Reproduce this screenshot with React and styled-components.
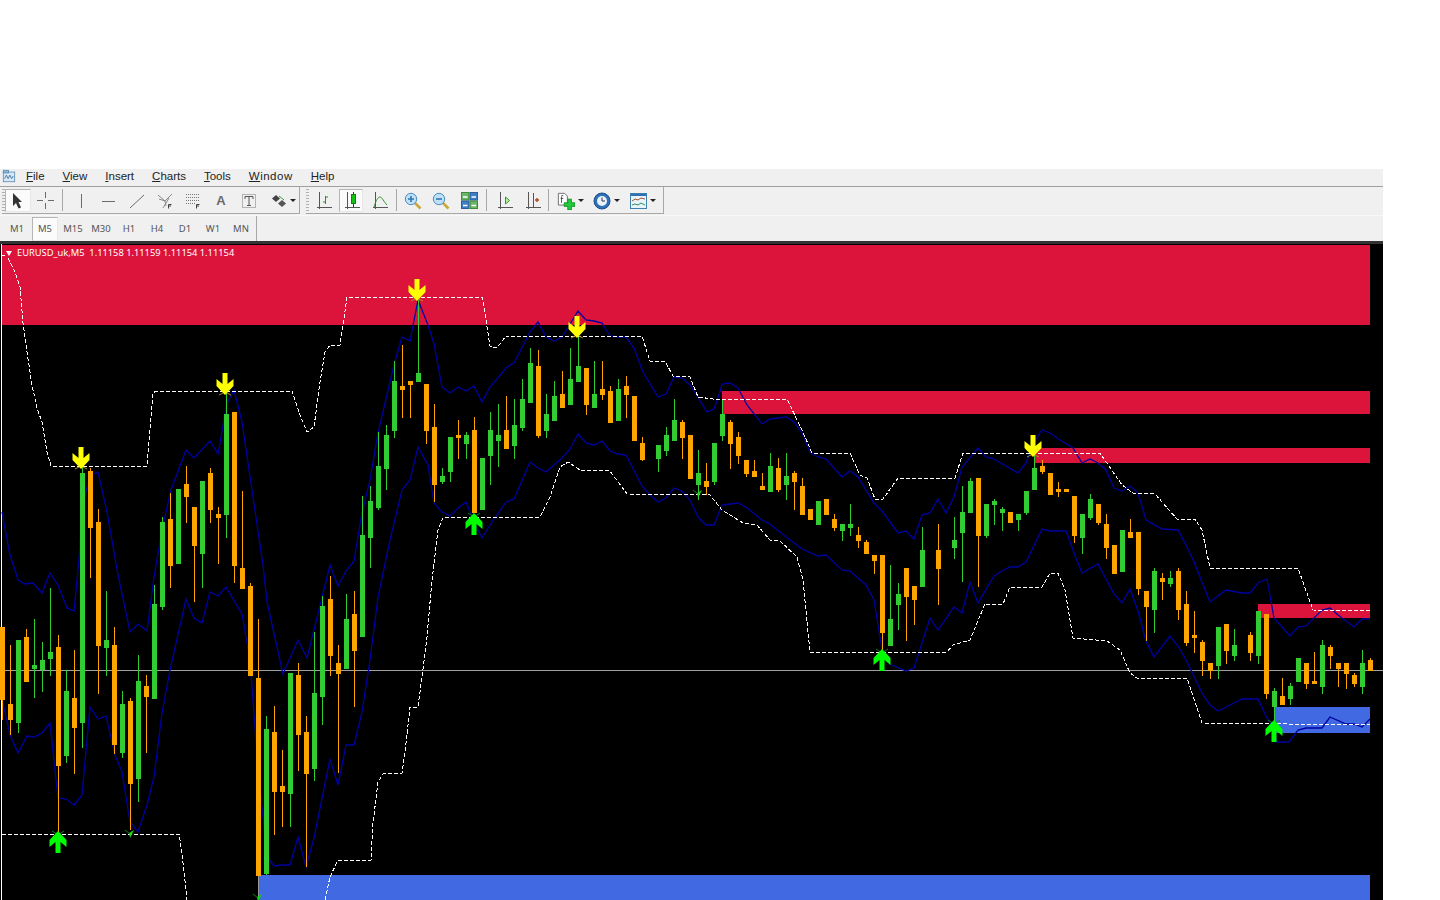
import styled, { createGlobalStyle } from "styled-components";

const GlobalStyle = createGlobalStyle`
  html, body {
    margin: 0;
    padding: 0;
    height: 900px;
    overflow: hidden;
    background: #fff;
    font-family: "Noto Sans", "Liberation Sans", sans-serif;
  }
`;

// [x, up?, bodyTop, bodyBottom, wickTop, wickBottom]
const CANDLES = [
  [2, 0, 627, 700, 627, 720], [10, 0, 704, 720, 645, 735], [18, 1, 640, 723, 640, 733],
  [26, 0, 637, 682, 629, 682], [34, 1, 665, 669, 619, 698], [42, 1, 660, 670, 642, 692],
  [50, 1, 652, 659, 588, 676], [58, 0, 647, 766, 635, 833], [66, 1, 691, 756, 670, 763],
  [74, 0, 698, 728, 650, 774], [82, 1, 473, 723, 467, 748], [90, 0, 471, 528, 468, 578],
  [98, 0, 522, 646, 509, 694], [106, 1, 640, 648, 591, 676], [114, 0, 645, 745, 627, 754],
  [122, 1, 704, 753, 691, 758], [130, 0, 701, 784, 698, 830], [138, 1, 681, 779, 655, 802],
  [146, 0, 686, 697, 675, 753], [154, 1, 604, 699, 585, 699], [162, 1, 522, 607, 517, 610],
  [170, 0, 519, 566, 493, 588], [178, 1, 489, 564, 489, 564], [186, 0, 484, 497, 466, 523],
  [194, 0, 507, 546, 507, 602], [202, 1, 481, 554, 481, 588], [210, 0, 473, 510, 468, 523],
  [218, 0, 514, 518, 507, 564], [226, 1, 414, 515, 393, 538], [234, 0, 412, 566, 412, 583],
  [242, 0, 568, 589, 491, 589], [250, 0, 586, 676, 583, 676], [258, 0, 678, 876, 619, 876],
  [266, 1, 729, 874, 716, 875], [274, 0, 732, 792, 706, 835], [282, 0, 786, 792, 750, 827],
  [290, 1, 673, 794, 673, 827], [298, 0, 675, 735, 663, 771], [306, 0, 732, 774, 716, 867],
  [314, 1, 693, 769, 632, 781], [322, 1, 606, 697, 596, 725], [330, 0, 599, 656, 576, 676],
  [338, 0, 663, 674, 645, 773], [346, 1, 619, 669, 594, 669], [354, 0, 614, 651, 591, 707],
  [362, 1, 535, 637, 496, 637], [370, 1, 501, 538, 486, 568], [378, 1, 466, 508, 432, 510],
  [386, 1, 435, 469, 425, 490], [394, 1, 381, 431, 361, 438], [402, 0, 386, 390, 345, 418],
  [410, 0, 381, 385, 381, 418], [418, 1, 373, 382, 300, 382], [426, 0, 384, 431, 384, 444],
  [434, 0, 427, 485, 404, 502], [442, 1, 476, 482, 468, 484], [450, 1, 437, 472, 437, 482],
  [458, 0, 435, 438, 420, 459], [466, 1, 435, 444, 432, 459], [474, 0, 430, 513, 417, 513],
  [482, 1, 458, 510, 458, 510], [490, 1, 430, 456, 412, 485], [498, 1, 435, 441, 404, 467],
  [506, 0, 430, 449, 396, 449], [514, 1, 425, 446, 399, 459], [522, 1, 399, 428, 379, 431],
  [530, 1, 363, 403, 348, 403], [538, 0, 366, 436, 350, 438], [546, 1, 414, 431, 394, 438],
  [554, 1, 396, 421, 381, 421], [562, 0, 394, 408, 371, 408], [570, 1, 379, 405, 348, 405],
  [578, 1, 366, 382, 337, 382], [586, 0, 368, 405, 368, 415], [594, 1, 394, 408, 361, 408],
  [602, 0, 389, 395, 361, 400], [610, 0, 391, 423, 386, 423], [618, 1, 389, 421, 379, 421],
  [626, 0, 386, 395, 376, 418], [634, 0, 396, 441, 396, 441], [642, 0, 443, 460, 437, 461],
  [658, 1, 445, 459, 445, 472], [666, 1, 435, 451, 427, 456], [674, 1, 420, 441, 399, 441],
  [682, 0, 422, 438, 420, 459], [690, 0, 435, 479, 435, 479], [698, 1, 473, 485, 450, 500],
  [706, 0, 481, 487, 463, 495], [714, 1, 443, 482, 443, 485], [722, 1, 414, 436, 399, 441],
  [730, 0, 422, 444, 420, 469], [738, 0, 437, 456, 432, 464], [746, 0, 460, 474, 460, 477],
  [754, 0, 471, 477, 460, 477], [762, 0, 486, 490, 473, 490], [770, 1, 466, 492, 453, 492],
  [778, 0, 468, 490, 458, 492], [786, 1, 476, 485, 453, 500], [794, 0, 473, 482, 471, 510],
  [802, 0, 486, 515, 478, 515], [810, 0, 509, 520, 509, 520], [818, 1, 501, 525, 501, 525],
  [826, 0, 499, 515, 499, 515], [834, 0, 519, 528, 514, 531], [842, 1, 524, 531, 524, 541],
  [850, 1, 524, 528, 504, 536], [858, 0, 535, 541, 527, 548], [866, 0, 542, 554, 540, 554],
  [874, 0, 555, 561, 555, 574], [882, 0, 555, 633, 555, 650], [890, 1, 619, 646, 565, 646],
  [898, 1, 594, 605, 583, 630], [906, 0, 568, 597, 568, 641], [914, 0, 586, 600, 586, 625],
  [922, 1, 550, 587, 527, 587], [938, 0, 550, 569, 524, 605], [954, 1, 540, 548, 517, 559],
  [962, 1, 512, 533, 486, 582], [970, 1, 481, 513, 478, 513], [978, 0, 478, 536, 478, 587],
  [986, 1, 504, 536, 504, 538], [994, 1, 501, 505, 499, 525], [1002, 1, 509, 513, 507, 531],
  [1010, 0, 512, 523, 512, 523], [1018, 1, 514, 520, 514, 531], [1026, 1, 491, 513, 491, 515],
  [1034, 1, 468, 490, 453, 490], [1042, 0, 466, 472, 460, 474], [1050, 0, 473, 495, 473, 495],
  [1058, 0, 489, 492, 482, 497], [1066, 0, 489, 492, 489, 492], [1074, 0, 496, 536, 496, 543],
  [1082, 1, 514, 538, 514, 554], [1090, 1, 499, 518, 494, 520], [1098, 0, 504, 523, 504, 525],
  [1106, 0, 524, 548, 514, 559], [1114, 0, 545, 574, 545, 574], [1122, 1, 530, 572, 530, 572],
  [1130, 0, 532, 538, 519, 538], [1138, 0, 532, 589, 532, 595], [1146, 0, 591, 607, 591, 641],
  [1154, 1, 571, 610, 568, 633], [1162, 0, 578, 582, 573, 600], [1170, 1, 578, 584, 571, 587],
  [1178, 0, 571, 610, 568, 620], [1186, 0, 604, 643, 591, 646], [1194, 0, 635, 638, 611, 653],
  [1202, 0, 642, 661, 640, 676], [1210, 0, 663, 671, 663, 679], [1218, 1, 627, 666, 627, 679],
  [1226, 0, 624, 651, 624, 664], [1234, 1, 645, 656, 629, 661], [1250, 0, 635, 653, 632, 661],
  [1258, 1, 611, 656, 611, 664], [1266, 0, 614, 694, 614, 699], [1274, 1, 691, 707, 688, 723],
  [1282, 0, 696, 705, 678, 705], [1290, 1, 686, 699, 683, 705], [1298, 1, 658, 682, 658, 682],
  [1306, 0, 663, 684, 663, 689], [1314, 0, 681, 684, 652, 684], [1322, 1, 645, 687, 640, 694],
  [1330, 0, 647, 656, 645, 669], [1338, 0, 663, 669, 663, 687], [1346, 0, 663, 674, 663, 689],
  [1354, 0, 675, 684, 673, 687], [1362, 1, 663, 687, 650, 694], [1370, 0, 660, 671, 658, 671],
];

const BAND_UP = "2,512 10,555 15,570 18,580 25,584 33,583 42,593 50,573 58,585 67,608 74,611 78,570 80,547 82,508 90,475 98,472 107,512 118,575 130,632 138,624 147,631 154,577 163,525 171,490 186,450 194,458 210,441 218,454 227,403 234,390 242,422 263,565 267,602 283,674 298,640 307,658 330,565 338,586 346,571 354,561 362,513 370,480 378,433 394,365 402,337 410,341 418,300 428,325 434,344 442,387 450,393 458,387 466,391 474,386 482,402 490,387 507,367 514,363 530,332 538,322 546,337 554,341 562,337 578,311 586,320 594,321 602,323 610,336 618,337 626,337 634,348 643,372 658,397 666,394 674,377 682,378 690,385 707,412 714,409 720,392 722,384 730,383 738,388 747,405 762,424 770,419 786,417 794,422 802,433 810,452 818,457 826,459 842,477 850,471 858,477 874,503 882,511 898,533 906,531 914,539 922,515 930,513 938,499 946,513 954,497 962,467 978,448 986,457 994,459 1018,473 1026,463 1034,442 1042,430 1050,433 1060,440 1073,448 1082,463 1090,459 1098,463 1106,470 1114,488 1122,491 1130,486 1138,493 1146,520 1162,529 1178,530 1186,545 1194,562 1210,602 1226,590 1242,593 1250,593 1258,583 1267,579 1274,618 1290,636 1298,627 1306,626 1322,610 1330,608 1338,615 1354,627 1362,619 1370,619";

const BAND_DOWN = "2,698 10,735 18,753 27,736 34,737 42,733 50,723 55,770 58,798 66,799 74,805 82,795 90,707 98,719 106,716 115,755 122,772 130,822 138,832 147,805 154,777 162,713 170,670 186,599 194,618 202,623 210,592 218,596 226,587 242,614 250,660 258,767 267,857 274,866 282,865 290,865 298,837 306,867 314,838 330,759 338,785 346,745 354,745 362,712 370,660 378,597 390,540 402,490 410,480 418,447 428,465 434,503 442,512 450,516 458,508 466,502 474,522 482,538 490,525 506,502 514,499 530,462 538,468 546,472 562,458 570,449 578,434 586,443 594,445 602,441 610,451 618,454 626,455 642,486 650,495 658,502 666,498 674,488 682,491 690,500 698,517 706,525 714,525 720,510 722,505 730,504 738,503 746,507 762,520 770,524 786,537 802,549 818,556 826,555 842,570 850,571 866,585 874,600 882,650 890,664 906,671 914,668 930,618 938,630 954,607 962,613 970,582 978,603 994,576 1002,571 1010,567 1018,567 1026,562 1042,529 1050,531 1066,531 1074,553 1082,573 1098,564 1114,594 1122,603 1130,589 1138,611 1146,641 1154,657 1170,636 1178,646 1186,660 1202,693 1210,705 1218,711 1234,703 1242,699 1258,699 1266,716 1274,730 1277,742 1289,742 1298,730 1306,728 1322,728 1330,717 1346,724 1354,724 1362,727 1370,719";

const CHANNEL_UP = "8,258 15,272 20,287 23,323 27,352 32,385 37,408 42,422 47,452 51,466 147,466 149,442 153,393 156,391 292,391 300,415 307,432 314,427 320,382 325,352 330,345 340,345 347,297 482,297 485,312 487,327 490,346 497,348 506,336 642,336 650,361 665,361 673,376 690,377 698,397 713,399 787,399 802,430 812,453 850,453 860,475 867,478 875,499 883,499 898,478 955,478 963,453 1100,453 1122,485 1133,493 1155,494 1177,519 1195,519 1202,530 1210,568 1298,568 1313,610 1370,611";

const CHANNEL_LOW_A = "2,834 179,834 182,853 187,900";

const CHANNEL_LOW_B = "325,900 330,877 338,860 371,860 373,823 378,782 383,774 402,773 405,752 410,707 418,707 422,677 427,637 432,580 438,530 443,518 540,517 550,497 560,467 568,462 580,470 610,471 627,494 710,495 722,510 743,523 757,525 770,540 780,541 797,557 803,580 810,652 947,652 953,645 970,640 985,604 1003,604 1010,587 1042,587 1050,573 1058,573 1065,590 1073,638 1107,641 1120,650 1130,673 1137,678 1187,678 1202,723 1370,725";

const RED_ZONES = [
  [2, 245, 1368, 80],
  [722, 391, 648, 23],
  [1035, 448, 335, 15],
  [1258, 604, 112, 14],
];

const BLUE_ZONES = [
  [259, 875, 1111, 25],
  [1274, 707, 96, 26],
];

const SELL_ARROWS = [[81, 469], [225, 395], [417, 301], [577, 338], [1033, 457]];
const BUY_ARROWS = [[58, 831], [474, 513], [882, 649], [1274, 720]];
const SMALL_TICKS = [[130, 834], [698, 494], [258, 898]];

const MENUS = [
  ["F", "ile"], ["V", "iew"], ["I", "nsert"], ["C", "harts"],
  ["T", "ools"], ["W", "indow", 0.5], ["H", "elp"],
];

const PERIODS = ["M1", "M5", "M15", "M30", "H1", "H4", "D1", "W1", "MN"];

const AppIcon = () => (
  <svg width="14" height="14" viewBox="0 0 16 16">
    <rect x="1.5" y="3.5" width="13" height="11" fill="#dbe9f6" stroke="#5f8fb8" />
    <rect x="1.5" y="1.5" width="6" height="3" fill="#8fb6d8" stroke="#5f8fb8" />
    <path d="M3 11l2-4 2 4 2-4 2 4 2-3" fill="none" stroke="#3a6f9c" />
  </svg>
);

const line = "#6b6b6b";

const CursorIcon = () => (
  <svg width="16" height="18" viewBox="0 0 16 18">
    <path d="M3 1v13l3-3 2.5 5.5 2.5-1L8.5 10H12z" fill="#333" />
  </svg>
);
const CrossIcon = () => (
  <svg width="17" height="17" viewBox="0 0 17 17">
    <path d="M8.5 0v6M8.5 11v6M0 8.5h6M11 8.5h6" stroke={line} fill="none" />
  </svg>
);
const VLineIcon = () => (
  <svg width="16" height="16" viewBox="0 0 16 16">
    <path d="M8.5 1v14" stroke={line} />
  </svg>
);
const HLineIcon = () => (
  <svg width="16" height="16" viewBox="0 0 16 16">
    <path d="M1 8.5h13" stroke={line} />
  </svg>
);
const TrendIcon = () => (
  <svg width="16" height="16" viewBox="0 0 16 16">
    <path d="M1 15L15 2" stroke={line} fill="none" />
  </svg>
);
const FanIcon = () => (
  <svg width="16" height="16" viewBox="0 0 16 16">
    <path d="M1 2l7 6M2 6l6 2M15 1L8 8M12 5L6 15M8 8l1 5" stroke="#8a8a8a" fill="none" />
    <path d="M11.5 15.5v-4h3M11.5 13h2.5" stroke="#444" fill="none" />
  </svg>
);
const FiboIcon = () => (
  <svg width="16" height="16" viewBox="0 0 16 16">
    <path d="M1 1.5h13M1 4.5h13M1 7.5h13M1 10.5h9" stroke="#777" strokeDasharray="1 1" fill="none" />
    <path d="M11.5 15.5v-4h3M11.5 13h2.5" stroke="#444" fill="none" />
  </svg>
);
const LabelIcon = () => (
  <svg width="16" height="16" viewBox="0 0 16 16">
    <rect x="1.5" y="1.5" width="13" height="13" fill="none" stroke="#777" strokeDasharray="1 1" />
    <path d="M4 3.5h8v2.5M4 3.5V6M8 3.5v9M6 12.5h4" stroke="#555" fill="none" />
  </svg>
);
const ShapesIcon = () => (
  <svg width="16" height="16" viewBox="0 0 16 16">
    <path d="M5 2l4 3.5-4 3.5-4-3.5z" fill="#444" />
    <path d="M11 7l4 3.5-4 3.5-4-3.5z" fill="#555" />
    <path d="M8 3l5 4" stroke="#3aa03a" fill="none" />
  </svg>
);
const Axes = () => <path d="M5.5 0v17M3 15.5h15" stroke="#555" fill="none" />;
const BarChartIcon = () => (
  <svg width="18" height="18" viewBox="0 0 18 18">
    <Axes />
    <path d="M11.5 4v8M11.5 5H14M9 10h2.5" stroke="#1c9a1c" fill="none" />
  </svg>
);
const CandleIcon = () => (
  <svg width="18" height="18" viewBox="0 0 18 18">
    <Axes />
    <path d="M11.5 0v15" stroke="#333" />
    <rect x="9.5" y="2.5" width="4" height="9" fill="#12c312" stroke="#1b7a1b" />
  </svg>
);
const LineChartIcon = () => (
  <svg width="18" height="18" viewBox="0 0 18 18">
    <Axes />
    <path d="M4 15C6 8 8 5 10 5C12 5 14 10 17 13" stroke="#2f8f2f" fill="none" />
  </svg>
);
const Glass = ({ plus }) => (
  <svg width="18" height="18" viewBox="0 0 18 18">
    <path d="M11 11l5.5 5.5" stroke="#c9a83a" strokeWidth="2.6" />
    <circle cx="7" cy="7" r="5.7" fill="#bfe0f7" stroke="#4a8fc4" />
    <path d={plus ? "M4 7h6M7 4v6" : "M4 7h6"} stroke="#2c78b4" strokeWidth="1.6" />
  </svg>
);
const TileIcon = () => (
  <svg width="17" height="17" viewBox="0 0 17 17">
    <rect x="0.5" y="0.5" width="7.5" height="7.5" fill="#6cb56a" stroke="#3f8a3c" />
    <rect x="9" y="0.5" width="7.5" height="7.5" fill="#3d7fc4" stroke="#2a5f9c" />
    <rect x="0.5" y="9" width="7.5" height="7.5" fill="#3d7fc4" stroke="#2a5f9c" />
    <rect x="9" y="9" width="7.5" height="7.5" fill="#6cb56a" stroke="#3f8a3c" />
    <path d="M2 5h4.5M10.5 5H15M2 13.5h4.5M10.5 13.5H15" stroke="#fff" strokeWidth="1.6" />
  </svg>
);
const ShiftIcon = () => (
  <svg width="18" height="18" viewBox="0 0 18 18">
    <Axes />
    <path d="M10.5 5v7l4-3.5z" fill="#bff0a0" stroke="#2c9a2c" />
  </svg>
);
const AutoIcon = () => (
  <svg width="18" height="18" viewBox="0 0 18 18">
    <Axes />
    <path d="M10.5 1v14" stroke="#555" />
    <path d="M12 8h4M14 6v4" stroke="#b5461f" strokeWidth="1.4" />
  </svg>
);
const NewChartIcon = () => (
  <svg width="18" height="18" viewBox="0 0 20 20">
    <path d="M1.5 1.5h7l3 3v10h-10z" fill="#fff" stroke="#666" />
    <path d="M5 5v7M4 7h3M5 4h2" stroke="#444" fill="none" />
    <path d="M12 8v4h-4v4h4v4h4v-4h4v-4h-4V8z" fill="#22c93a" stroke="#139126" />
  </svg>
);
const ClockIcon = () => (
  <svg width="18" height="18" viewBox="0 0 18 18">
    <circle cx="9" cy="9" r="8" fill="#2f6fb5" stroke="#1d4f8a" />
    <circle cx="9" cy="9" r="5" fill="#e8f2fb" />
    <path d="M9 5.5V9h3" stroke="#335" fill="none" />
  </svg>
);
const TemplateIcon = () => (
  <svg width="17" height="16" viewBox="0 0 17 16">
    <rect x="0.5" y="0.5" width="16" height="15" fill="#e8f3fa" stroke="#3f7fae" />
    <rect x="1" y="1" width="15" height="2" fill="#2f6fb5" />
    <path d="M2 8l3-2 3 1 3-2 4 1" stroke="#a0522d" fill="none" />
    <path d="M2 12l3-1 3 1 3-2 4 2" stroke="#2f8f5f" fill="none" />
  </svg>
);

const arrowPoints = (cx, tip, dir) =>
  [
    [-2.5, 22], [2.5, 22], [2.5, 11], [8.5, 16], [8.5, 9], [0, 0], [-8.5, 9], [-8.5, 16], [-2.5, 11],
  ].map(([dx, dy]) => `${cx + dx},${tip - dir * dy}`).join(" ");

const Chart = () => (
  <ChartSvg viewBox="0 244 1383 656" width="1383" height="656">
    <g shapeRendering="crispEdges">
      <rect x="1" y="244" width="1" height="656" fill="#fff" />
      {RED_ZONES.map(([x, y, w, h]) => (
        <rect key={x} x={x} y={y} width={w} height={h} fill="#dc143c" />
      ))}
      {BLUE_ZONES.map(([x, y, w, h]) => (
        <rect key={x} x={x} y={y} width={w} height={h} fill="#4169e1" />
      ))}
      <rect x="258" y="875" width="1" height="25" fill="#999" />
      <rect x="2" y="670" width="1381" height="1" fill="#a0a0a0" />
    </g>
    <polyline points={BAND_UP} fill="none" stroke="#0000a0" strokeWidth="1.3" />
    <polyline points={BAND_DOWN} fill="none" stroke="#0000a0" strokeWidth="1.3" />
    <g shapeRendering="crispEdges">
      {CANDLES.map(([x, up, top, bottom, wickTop, wickBottom]) => {
        const color = up ? "#32cd32" : "#ffa500";
        return (
          <g key={x} fill={color}>
            <rect x={x} y={wickTop} width="1" height={wickBottom - wickTop} />
            <rect x={x - 2} y={top} width="5" height={bottom - top} />
          </g>
        );
      })}
    </g>
    {[CHANNEL_UP, CHANNEL_LOW_A, CHANNEL_LOW_B].map((points) => (
      <polyline
        key={points}
        points={points}
        fill="none"
        stroke="#fff"
        strokeWidth="1"
        strokeDasharray="4 2"
        shapeRendering="crispEdges"
      />
    ))}
    {SELL_ARROWS.map(([cx, tip]) => (
      <g key={cx}>
        <path d={`M${cx - 6} ${tip}L${cx} ${tip - 3}L${cx + 6} ${tip}`} fill="none" stroke="#b08a20" />
        <polygon points={arrowPoints(cx, tip, 1)} fill="#ffff00" />
      </g>
    ))}
    {BUY_ARROWS.map(([cx, tip]) => (
      <g key={cx}>
        <path d={`M${cx - 6} ${tip}L${cx} ${tip + 4}L${cx + 6} ${tip}`} fill="none" stroke="#1a7a1a" />
        <polygon points={arrowPoints(cx, tip, -1)} fill="#00ff00" />
      </g>
    ))}
    {SMALL_TICKS.map(([cx, y]) => (
      <g key={cx}>
        <path d={`M${cx - 5} ${y - 4}L${cx} ${y}`} stroke="#1a7a1a" fill="none" />
        <polygon points={`${cx + 4},${y - 4} ${cx},${y + 4} ${cx - 1},${y - 1}`} fill="#14d414" />
      </g>
    ))}
    <polygon points="6,251 12,251 9,256" fill="#fff" />
    <rect x="2" y="255" width="3" height="1" fill="#fff" />
  </ChartSvg>
);

const App = () => (
  <>
    <GlobalStyle />
    <Page>
      <Terminal>
        <MenuBar>
          <AppLogo><AppIcon /></AppLogo>
          {MENUS.map(([key, rest, spacing]) => (
            <MenuItem key={key} $spacing={spacing}><u>{key}</u>{rest}</MenuItem>
          ))}
        </MenuBar>
        <ToolRow>
          <ToolGroup $width={298}>
            <Grip />
            <ToolButton $active $narrow><CursorIcon /></ToolButton>
            <ToolButton><CrossIcon /></ToolButton>
            <Separator $left={3} $right={4} />
            <ToolButton><VLineIcon /></ToolButton>
            <ToolButton><HLineIcon /></ToolButton>
            <ToolButton><TrendIcon /></ToolButton>
            <ToolButton><FanIcon /></ToolButton>
            <ToolButton><FiboIcon /></ToolButton>
            <ToolButton><LetterIcon>A</LetterIcon></ToolButton>
            <ToolButton><LabelIcon /></ToolButton>
            <ToolButton $menu><ShapesIcon /><Caret /></ToolButton>
          </ToolGroup>
          <ToolGroup $width={358}>
            <Grip />
            <ToolButton><BarChartIcon /></ToolButton>
            <ToolButton $active><CandleIcon /></ToolButton>
            <ToolButton><LineChartIcon /></ToolButton>
            <Separator $left={3} $right={2} />
            <ToolButton><Glass plus /></ToolButton>
            <ToolButton><Glass /></ToolButton>
            <ToolButton><TileIcon /></ToolButton>
            <Separator $left={3} $right={3} />
            <ToolButton><ShiftIcon /></ToolButton>
            <ToolButton><AutoIcon /></ToolButton>
            <Separator $left={2} $right={2} />
            <ToolButton $menu><NewChartIcon /><Caret /></ToolButton>
            <ToolButton $menu><ClockIcon /><Caret /></ToolButton>
            <ToolButton $menu><TemplateIcon /><Caret /></ToolButton>
          </ToolGroup>
        </ToolRow>
        <PeriodRow>
          <PeriodGroup>
            {PERIODS.map((p) => (
              <PeriodButton key={p} $active={p === "M5"}>{p}</PeriodButton>
            ))}
          </PeriodGroup>
        </PeriodRow>
        <ChartFrame>
          <Chart />
          <ChartLabel>EURUSD_uk,M5&nbsp; 1.11158 1.11159 1.11154 1.11154</ChartLabel>
        </ChartFrame>
      </Terminal>
    </Page>
  </>
);

export default App;

const Page = styled.div`
  height: 900px;
  padding-top: 169px;
  box-sizing: border-box;
  overflow: hidden;
`;

const Terminal = styled.div`
  width: 1383px;
  background: #f0f0f0;
`;

const MenuBar = styled.div`
  display: flex;
  align-items: center;
  gap: 18px;
  height: 17px;
  border-bottom: 1px solid #a0a0a0;
  font-family: "Liberation Sans", sans-serif;
  font-size: 11.5px;
  color: #222;
`;

const AppLogo = styled.span`
  display: flex;
  margin: 0 -8px 3px 2px;
`;

const MenuItem = styled.span`
  line-height: 15px;
  margin-bottom: 2px;
  letter-spacing: ${(p) => p.$spacing || 0}px;
`;

const ToolRow = styled.div`
  display: flex;
  height: 28px;
  gap: 6px;
  padding-left: 2px;
  border-bottom: 1px solid #f8f8f8;
`;

const ToolGroup = styled.div`
  display: flex;
  align-items: flex-start;
  width: ${(p) => p.$width}px;
  height: 27px;
  padding-top: 2px;
  box-sizing: border-box;
  border-bottom: 1px solid #a8a8a8;
  border-right: 1px solid #a8a8a8;
`;

const Grip = styled.span`
  width: 3px;
  height: 22px;
  flex: none;
  background: repeating-linear-gradient(#b0b0b0 0 1px, transparent 1px 3px);
`;

const ToolButton = styled.div`
  display: flex;
  align-items: center;
  justify-content: ${(p) => (p.$menu ? "flex-end" : "center")};
  gap: 3px;
  flex: none;
  box-sizing: border-box;
  width: ${(p) => (p.$menu ? 36 : 28)}px;
  height: 23px;
  padding-right: ${(p) => (p.$menu ? 3 : 0)}px;
  ${(p) =>
    p.$active &&
    `
    background: #fbfbfb;
    border: 1px solid #b5b5b5;
    border-right-color: #e8e8e8;
    border-bottom-color: #e8e8e8;
    margin: 0 ${p.$narrow ? 0 : 2}px;
    width: ${p.$narrow ? 26 : 24}px;
  `}
`;

const LetterIcon = styled.span`
  font-family: "Liberation Sans", sans-serif;
  font-size: 13px;
  font-weight: 700;
  color: #6a6a6a;
`;

const Caret = styled.span`
  width: 0;
  height: 0;
  border-left: 3px solid transparent;
  border-right: 3px solid transparent;
  border-top: 3px solid #222;
`;

const Separator = styled.span`
  width: 1px;
  height: 22px;
  flex: none;
  margin: 0 ${(p) => p.$right}px 0 ${(p) => p.$left}px;
  background: #a8a8a8;
`;

const PeriodRow = styled.div`
  height: 25px;
  border-bottom: 3px solid #333;
`;

const PeriodGroup = styled.div`
  display: flex;
  align-items: center;
  width: 257px;
  height: 25px;
  padding-left: 3px;
  box-sizing: border-box;
  border-right: 1px solid #a8a8a8;
`;

const PeriodButton = styled.div`
  width: 28px;
  height: 24px;
  box-sizing: border-box;
  text-align: center;
  font-size: 9.5px;
  line-height: 24px;
  color: #555;
  ${(p) =>
    p.$active &&
    `
    width: 26px;
    margin: 0 1px;
    background: #fbfbfb;
    border: 1px solid #b5b5b5;
    border-right-color: #e8e8e8;
    border-bottom-color: #e8e8e8;
    line-height: 22px;
  `}
`;

const ChartFrame = styled.div`
  position: relative;
  height: 656px;
  background: #000;
`;

const ChartSvg = styled.svg`
  display: block;
`;

const ChartLabel = styled.div`
  position: absolute;
  top: 2px;
  left: 17px;
  font-size: 9.3px;
  line-height: 13px;
  color: #fff;
  white-space: nowrap;
`;
